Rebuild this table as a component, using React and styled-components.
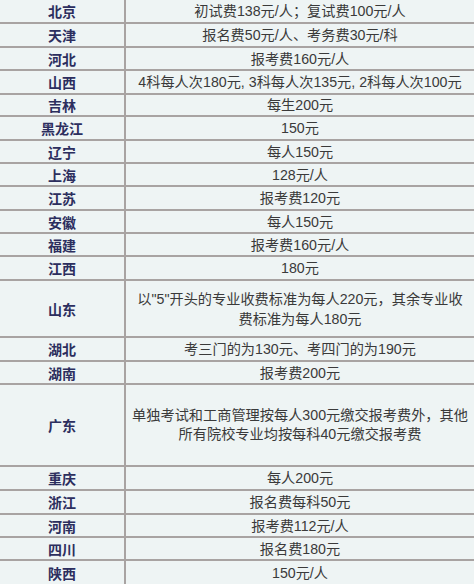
import React from 'react';
import styled, { createGlobalStyle } from 'styled-components';

const GlobalStyle = createGlobalStyle`
  html, body {
    margin: 0;
    padding: 0;
    background: #eef4f4;
  }
  body {
    font-family: "Liberation Sans", "Noto Sans CJK SC", sans-serif;
  }
`;

const Table = styled.div`
  width: 474px;
  height: 584px;
  overflow: hidden;
  background: #eef4f4;
  display: flex;
  flex-direction: column;
`;

const Row = styled.div`
  display: grid;
  grid-template-columns: 126px 1fr;
  box-sizing: border-box;
  height: ${(p) => p.$h}px;
  border-bottom: 2px solid #a8a3a2;
  flex: none;
`;

const Province = styled.div`
  display: flex;
  align-items: center;
  justify-content: center;
  border-right: 2px solid #a8a3a2;
  font-size: 14px;
  font-weight: bold;
  color: #2c2e5e;
`;

const Fee = styled.div`
  display: flex;
  align-items: center;
  justify-content: center;
  text-align: center;
  padding: 0 6px;
  font-size: 14.2px;
  line-height: ${(p) => p.$lh || 20}px;
  color: #3a3a3a;
`;

const rows = [
  { name: '北京', fee: '初试费138元/人；复试费100元/人', h: 24 },
  { name: '天津', fee: '报名费50元/人、考务费30元/科', h: 24 },
  { name: '河北', fee: '报考费160元/人', h: 23 },
  { name: '山西', fee: '4科每人次180元, 3科每人次135元, 2科每人次100元', h: 24 },
  { name: '吉林', fee: '每生200元', h: 22 },
  { name: '黑龙江', fee: '150元', h: 24 },
  { name: '辽宁', fee: '每人150元', h: 23 },
  { name: '上海', fee: '128元/人', h: 23 },
  { name: '江苏', fee: '报考费120元', h: 24 },
  { name: '安徽', fee: '每人150元', h: 23 },
  { name: '福建', fee: '报考费160元/人', h: 23 },
  { name: '江西', fee: '180元', h: 24 },
  {
    name: '山东',
    fee: ['以"5"开头的专业收费标准为每人220元，其余专业收', '费标准为每人180元'],
    h: 57,
  },
  { name: '湖北', fee: '考三门的为130元、考四门的为190元', h: 24 },
  { name: '湖南', fee: '报考费200元', h: 23 },
  {
    name: '广东',
    fee: ['单独考试和工商管理按每人300元缴交报考费外，其他', '所有院校专业均按每科40元缴交报考费'],
    h: 82,
    lh: 19,
  },
  { name: '重庆', fee: '每人200元', h: 24 },
  { name: '浙江', fee: '报名费每科50元', h: 24 },
  { name: '河南', fee: '报考费112元/人', h: 23 },
  { name: '四川', fee: '报名费180元', h: 23 },
  { name: '陕西', fee: '150元/人', h: 25 },
];

export default function App() {
  return (
    <>
      <GlobalStyle />
      <Table>
        {rows.map((r) => (
          <Row key={r.name} $h={r.h}>
            <Province>{r.name}</Province>
            <Fee $lh={r.lh}>
              {Array.isArray(r.fee) ? (
                <span>
                  {r.fee[0]}
                  <br />
                  {r.fee[1]}
                </span>
              ) : (
                r.fee
              )}
            </Fee>
          </Row>
        ))}
      </Table>
    </>
  );
}
